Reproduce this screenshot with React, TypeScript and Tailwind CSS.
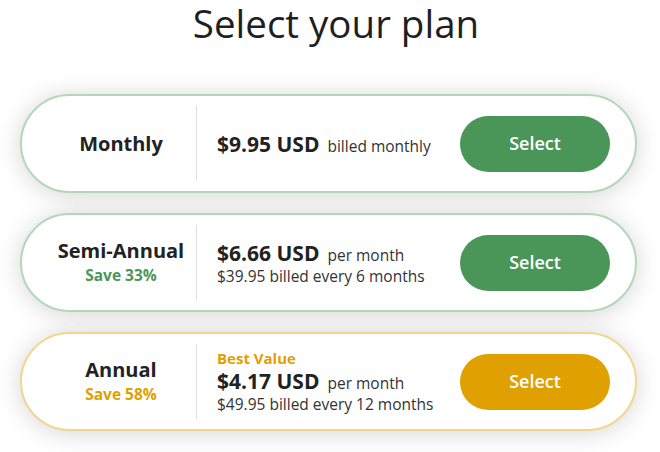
import type { ReactNode } from 'react';

type Plan = {
  name: string;
  save?: string;
  badge?: string;
  price: string;
  unit: string;
  note?: string;
  gold?: boolean;
};

const PLANS: Plan[] = [
  { name: 'Monthly', price: '$9.95 USD', unit: 'billed monthly' },
  {
    name: 'Semi-Annual',
    save: 'Save 33%',
    price: '$6.66 USD',
    unit: 'per month',
    note: '$39.95 billed every 6 months',
  },
  {
    name: 'Annual',
    save: 'Save 58%',
    badge: 'Best Value',
    price: '$4.17 USD',
    unit: 'per month',
    note: '$49.95 billed every 12 months',
    gold: true,
  },
];

function PlanCard({ plan }: { plan: Plan }): ReactNode {
  const accent = plan.gold ? 'text-[#e0a000]' : 'text-[#4a9658]';
  return (
    <div
      className={`flex h-[99px] items-center rounded-full border-2 bg-white shadow-[0_2px_24px_rgba(0,0,0,0.17)] ${
        plan.gold ? 'border-[#f2d68e]' : 'border-[#b3d7b9]'
      }`}
    >
      <div className="ml-[24px] flex w-[150px] flex-col items-center">
        <span className="text-[20px] font-bold leading-[25px] text-[#222]">{plan.name}</span>
        {plan.save && (
          <span className={`text-[15.5px] font-bold leading-[24px] ${accent}`}>{plan.save}</span>
        )}
      </div>
      <div className="h-[75px] w-px bg-[#dedede]" />
      <div className="flex flex-1 flex-col pl-[20px] text-[#222]">
        {plan.badge && (
          <span className={`text-[15px] font-bold leading-[19px] ${accent}`}>{plan.badge}</span>
        )}
        <div className="flex items-baseline gap-[8px]">
          <span className="text-[21px] font-bold leading-[26px]">{plan.price}</span>
          <span className="text-[15.5px] leading-[20px] text-[#333]">{plan.unit}</span>
        </div>
        {plan.note && <span className="text-[15.5px] leading-[20px] text-[#333]">{plan.note}</span>}
      </div>
      <button
        className={`mr-[25px] h-[56px] w-[150px] rounded-full text-[18px] font-semibold text-white ${
          plan.gold ? 'bg-[#e0a000]' : 'bg-[#4a9658]'
        }`}
      >
        Select
      </button>
    </div>
  );
}

export default function App() {
  return (
    <main className="h-[452px] w-[660px] overflow-hidden bg-white font-['Open_Sans',sans-serif]">
      <h1 className="pl-[12px] text-center text-[38.5px] font-medium leading-[46px] text-[#1f1f1f]">
        Select your plan
      </h1>
      <div className="ml-[20px] mt-[48px] flex w-[617px] flex-col gap-[20px]">
        {PLANS.map((plan) => (
          <PlanCard key={plan.name} plan={plan} />
        ))}
      </div>
    </main>
  );
}
